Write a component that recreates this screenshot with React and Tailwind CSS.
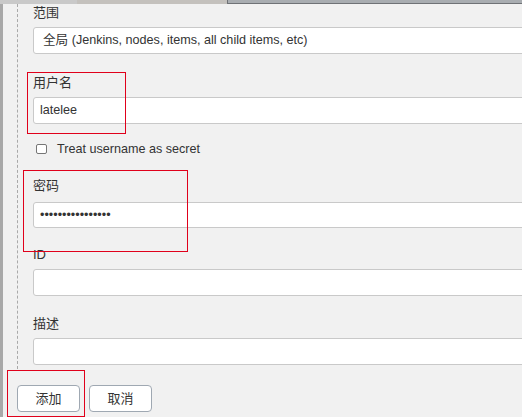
export default function App() {
  const font = { fontFamily: '"Liberation Sans", Arial, "Noto Sans CJK SC", sans-serif' };

  const Label = ({ children, className = '' }) => (
    <div className={`h-[18px] leading-[18px] text-[13px] text-[#333] ${className}`}>{children}</div>
  );

  const Field = ({ children, className = '' }) => (
    <div className={`h-[27px] w-[500px] rounded-[3px] border border-[#c9c9c9] bg-white flex items-center text-[12.6px] text-[#333] ${className}`}>
      {children}
    </div>
  );

  return (
    <div className="relative w-[522px] h-[417px] overflow-hidden bg-[#f1f1f1]" style={font}>
      {/* top strip */}
      <div className="flex h-[4px]">
        <div className="w-[77px] bg-[#c9c9c9]" />
        <div className="w-[150px] bg-[#c4c1bd]" />
        <div className="w-[1px] bg-[#6f7276]" />
        <div className="flex-1 bg-[#a9adb1] border-b border-[#6f7276]" />
      </div>

      <div className="flex">
        <div className="w-[3px] shrink-0 h-[413px] bg-[#a8a8a8]" />
        <div className="flex-1 min-w-0">
          <div className="ml-[14px] border-l border-dashed border-[#a9a9a9] pl-[15px] pb-[4px]">
            <Label>范围</Label>
            <Field className="mt-[5px] pl-[9px]">全局 (Jenkins, nodes, items, all child items, etc)</Field>

            <Label className="mt-[20px]">用户名</Label>
            <Field className="mt-[5px] pl-[6px]">latelee</Field>

            <label className="mt-[16px] h-[18px] flex items-center pl-[3px] text-[12.6px] text-[#333]">
              <span className="w-[11px] h-[10px] rounded-[2px] border border-[#767676] bg-white" />
              <span className="ml-[10px]">Treat username as secret</span>
            </label>

            <Label className="mt-[19px]">密码</Label>
            <Field className="mt-[7px] !h-[26px] pl-[6px] text-[10.5px]">••••••••••••••••</Field>

            <Label className="mt-[18px]">ID</Label>
            <Field className="mt-[5px]" />

            <Label className="mt-[19px]">描述</Label>
            <Field className="mt-[5px]" />
          </div>

          <div className="flex gap-[9px] ml-[14px] mt-[16px]">
            <button className="w-[63px] h-[27px] rounded-[4px] border border-[#9fa8b2] bg-white text-[13px] text-[#333]">添加</button>
            <button className="w-[63px] h-[27px] rounded-[4px] border border-[#9fa8b2] bg-white text-[13px] text-[#333]">取消</button>
          </div>
        </div>
      </div>

      {/* annotation boxes */}
      <div className="absolute left-[27px] top-[72px] w-[99px] h-[62px] border border-[#e0001b]" />
      <div className="absolute left-[23px] top-[170px] w-[165px] h-[82px] border border-[#e0001b]" />
      <div className="absolute left-[7px] top-[370px] w-[78px] h-[47px] border border-[#e0001b]" />
    </div>
  );
}
